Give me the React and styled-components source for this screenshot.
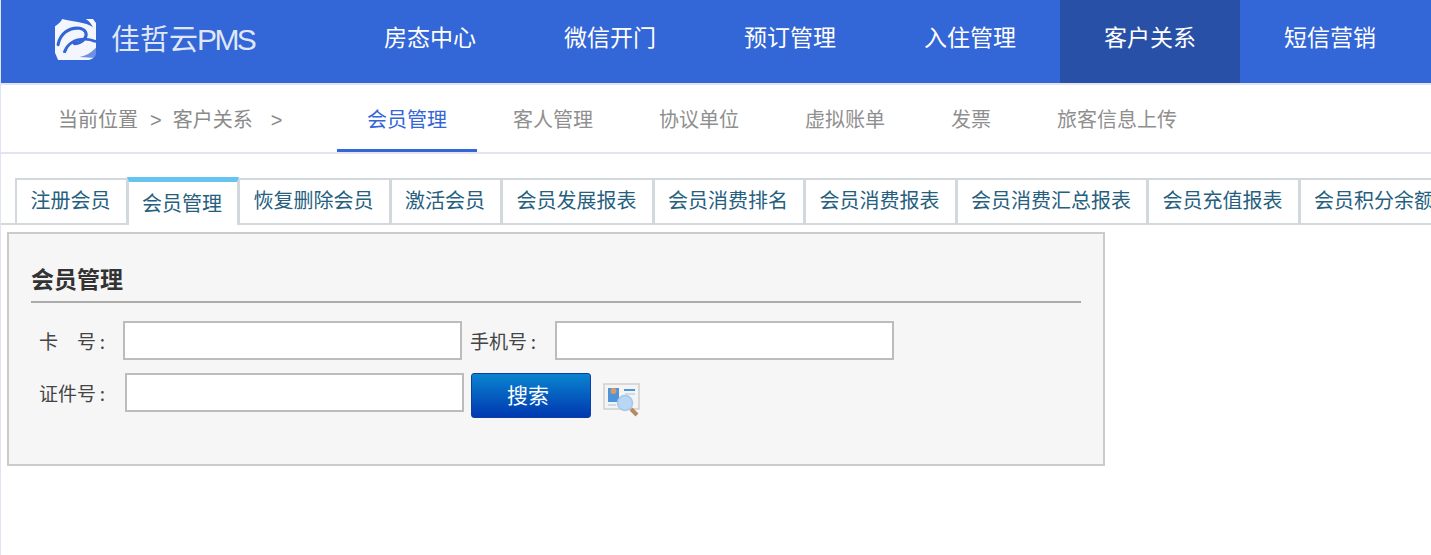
import React from 'react';
import styled, { createGlobalStyle } from 'styled-components';

const CJK = '"Noto Sans CJK SC", "Liberation Sans", sans-serif';

const GlobalStyle = createGlobalStyle`
  html, body {
    margin: 0;
    padding: 0;
    background: #fff;
    overflow: hidden;
  }
  * { box-sizing: border-box; }
`;

const navItems = ['房态中心', '微信开门', '预订管理', '入住管理', '客户关系', '短信营销'];
const subItems = ['会员管理', '客人管理', '协议单位', '虚拟账单', '发票', '旅客信息上传'];
const tabs = ['注册会员', '会员管理', '恢复删除会员', '激活会员', '会员发展报表', '会员消费排名', '会员消费报表', '会员消费汇总报表', '会员充值报表', '会员积分余额报表'];

const Page = styled.div`
  width: 1431px;
  height: 555px;
  overflow: hidden;
  font-family: ${CJK};
  border-left: 1px solid #e2e2f4;
`;

const Header = styled.header`
  height: 83px;
  background: #3366d6;
  display: flex;
  margin-left: -1px;
`;

const Brand = styled.div`
  width: 340px;
  padding: 19px 0 0 55px;
  display: flex;
  align-items: flex-start;
  gap: 16px;
`;

const BrandName = styled.span`
  font-size: 29px;
  line-height: 37px;
  margin-left: -1px;
  color: rgba(255, 255, 255, 0.85);
  white-space: nowrap;
  small {
    font-family: "Liberation Sans", sans-serif;
    font-size: 30px;
    letter-spacing: -2.6px;
    margin-left: -1px;
  }
`;

const NavItem = styled.a`
  width: 180px;
  text-align: center;
  font-size: 23px;
  line-height: 73px;
  color: #fff;
  background: ${(p) => (p.$active ? '#2850a6' : 'transparent')};
`;

const SubBar = styled.div`
  height: 71px;
  border-top: 2px solid #e4e4f0;
  border-bottom: 2px solid #e4e4f0;
  display: flex;
  padding-left: 57px;
`;

const Crumb = styled.div`
  width: 279px;
  font-size: 20px;
  line-height: 67px;
  color: #8a8a8a;
  white-space: nowrap;
`;

const CrumbSep = styled.span`
  font-family: "Liberation Sans", sans-serif;
  font-size: 20px;
  margin: 0 ${(p) => p.$after}px 0 ${(p) => p.$gap}px;
`;

const SubItem = styled.a`
  height: 67px;
  padding: 0 30px;
  margin-right: 6px;
  font-size: 20px;
  line-height: 67px;
  color: ${(p) => (p.$active ? '#3366d6' : '#8f8f8f')};
  border-bottom: 3px solid ${(p) => (p.$active ? '#3366d6' : 'transparent')};
`;

const TabStrip = styled.div`
  margin-top: 23px;
  margin-left: -1px;
  height: 48px;
  padding-left: 15px;
  display: flex;
  align-items: flex-start;
  overflow: hidden;
  box-shadow: inset 0 -2px 0 #d2d9dd;
  white-space: nowrap;
`;

const Tab = styled.div`
  flex: none;
  height: ${(p) => (p.$active ? '48px' : '47px')};
  margin-top: ${(p) => (p.$active ? '0' : '1px')};
  padding: ${(p) => (p.$active ? '6px' : '5px')} 15px 0 13.5px;
  margin-right: -1px;
  font-size: 20px;
  line-height: 30px;
  color: #26607e;
  background: #fff;
  border: 2px solid #d2d9dd;
  border-top: ${(p) => (p.$active ? '5px solid #66c5f0' : '2px solid #d2d9dd')};
  border-bottom: ${(p) => (p.$active ? '0' : '2px solid #d2d9dd')};
  position: relative;
  z-index: ${(p) => (p.$active ? 1 : 0)};
`;

const Panel = styled.section`
  margin: 7px 0 0 6px;
  width: 1098px;
  height: 234px;
  background: #f6f6f6;
  border: 2px solid #cbcbcb;
  padding: 22px 22px 0;
`;

const PanelTitle = styled.h2`
  margin: 0 0 18px;
  height: 47px;
  font-size: 23px;
  line-height: 44px;
  font-weight: 700;
  color: #333;
  border-bottom: 2px solid #ababab;
`;

const FormRow = styled.div`
  display: flex;
  align-items: flex-start;
  margin-bottom: 13px;
  padding-left: 8px;
`;

const Label = styled.label`
  width: ${(p) => p.$width}px;
  font-size: 19px;
  line-height: 39px;
  color: #444;
  white-space: pre;
`;

const TextInput = styled.input`
  width: 339px;
  height: 39px;
  background: #fff;
  border: 2px solid #bcbcbc;
  margin-right: 8px;
  outline: none;
`;

const SearchButton = styled.button`
  width: 120px;
  height: 45px;
  margin-left: -1px;
  border: 1px solid #0a3fa8;
  border-radius: 3px;
  background: linear-gradient(#0a84cf, #0038b0);
  color: #fff;
  font-family: ${CJK};
  font-size: 21px;
  line-height: 41px;
  padding: 0 6px 3px 0;
`;

const CardIcon = styled.svg`
  width: 38px;
  height: 36px;
  margin: 9px 0 0 12px;
`;

const LogoMark = () => (
  <svg width="41" height="41" viewBox="0 0 40 40">
    <defs>
      <filter id="logoSoft" x="-5%" y="-5%" width="110%" height="110%">
        <feGaussianBlur stdDeviation="0.6" />
      </filter>
    </defs>
    <g filter="url(#logoSoft)">
      <path d="M7 0c-2 4-4 5-7 7v26l3 7h30c4-1 7-3 7-7V4l-3-4H30c3 2 5 4 7 8C31 3 14 2 7 0z" fill="#f4f6fd" />
      <path d="M3 25C5 14 14 8 24 9c6 1 8 6 5 10-2 3-6 5-10 5" fill="none" stroke="#3366d6" strokeWidth="3" strokeLinecap="round" />
      <path d="M9 33c2-7 8-12 16-13 5-1 10 0 15 2" fill="none" stroke="#3366d6" strokeWidth="2.8" />
      <path d="M24 37c6-1 11-4 16-9v10z" fill="#3366d6" opacity="0.7" />
    </g>
  </svg>
);

const SearchCard = () => (
  <CardIcon viewBox="0 0 38 36">
    <defs>
      <filter id="cardSoft" x="-5%" y="-5%" width="110%" height="110%">
        <feGaussianBlur stdDeviation="0.55" />
      </filter>
    </defs>
    <g filter="url(#cardSoft)">
      <rect x="1" y="2" width="35" height="25" fill="#f4f4f4" stroke="#cfcfcf" strokeWidth="1.5" />
      <rect x="5" y="6" width="11" height="14" fill="#4d94d8" />
      <circle cx="10.5" cy="9" r="3" fill="#d99a68" />
      <path d="M21 8h11" stroke="#4d94d8" strokeWidth="2" />
      <path d="M22 12h10M5 23h8" stroke="#bfd3e6" strokeWidth="1.5" />
      <circle cx="22" cy="21" r="7.5" fill="#b9d7f4" stroke="#a4c6e8" strokeWidth="1.5" />
      <path d="M28 27l6 6" stroke="#b98a62" strokeWidth="4" />
    </g>
  </CardIcon>
);

export default function App() {
  return (
    <Page>
      <GlobalStyle />
      <Header>
        <Brand>
          <LogoMark />
          <BrandName>佳哲云<small>PMS</small></BrandName>
        </Brand>
        {navItems.map((item) => (
          <NavItem key={item} $active={item === '客户关系'}>{item}</NavItem>
        ))}
      </Header>
      <SubBar>
        <Crumb>
          当前位置<CrumbSep $gap={12} $after={11}>&gt;</CrumbSep>客户关系<CrumbSep $gap={18} $after={0}>&gt;</CrumbSep>
        </Crumb>
        {subItems.map((item, i) => (
          <SubItem key={item} $active={i === 0}>{item}</SubItem>
        ))}
      </SubBar>
      <TabStrip>
        {tabs.map((item, i) => (
          <Tab key={item} $active={i === 1}>{item}</Tab>
        ))}
      </TabStrip>
      <Panel>
        <PanelTitle>会员管理</PanelTitle>
        <FormRow>
          <Label $width={84}>{'卡\u3000号\u2009:'}</Label>
          <TextInput />
          <Label $width={85}>{'手机号\u2009:'}</Label>
          <TextInput />
        </FormRow>
        <FormRow>
          <Label $width={86}>{'证件号\u2009:'}</Label>
          <TextInput />
          <SearchButton>搜索</SearchButton>
          <SearchCard />
        </FormRow>
      </Panel>
    </Page>
  );
}
